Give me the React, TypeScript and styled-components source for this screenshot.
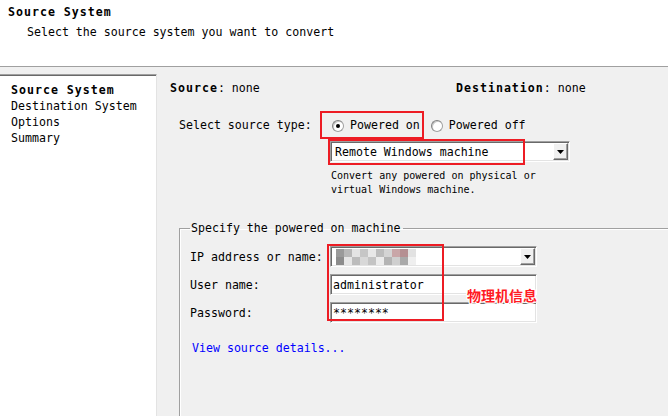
import React from "react";
import styled, { createGlobalStyle } from "styled-components";

const GlobalStyle = createGlobalStyle`
  html, body { margin: 0; padding: 0; }
  body {
    background: #f0f0f0;
    font-family: "DejaVu Sans Mono", "Liberation Mono", monospace;
    font-size: 11.6px;
    color: #000;
  }
  * { box-sizing: border-box; }
`;

const Page = styled.div`
  width: 668px;
  height: 416px;
  overflow: hidden;
  display: flex;
  flex-direction: column;
  background: #f0f0f0;
`;

const Header = styled.header`
  flex-shrink: 0;
  height: 67px;
  background: #fff;
  border-bottom: 1px solid #a0a0a0;
  padding: 4px 0 0 8px;
`;

const Title = styled.div`
  font-weight: bold;
  letter-spacing: 1px;
  line-height: 16px;
`;

const Subtitle = styled.div`
  margin-top: 4px;
  padding-left: 19px;
  line-height: 16px;
`;

const Body = styled.div`
  flex: 1;
  min-height: 0;
  display: flex;
  margin-top: 7px;
`;

const Nav = styled.nav`
  width: 157px;
  flex-shrink: 0;
  background: #fff;
  border-top: 1px solid #a0a0a0;
  border-right: 1px solid #e3e3e3;
  box-shadow: inset 0 1px 0 #696969;
  padding: 7px 0 0 11px;
`;

const NavItem = styled.div<{ $active?: boolean }>`
  line-height: 16px;
  white-space: nowrap;
  font-weight: ${(p) => (p.$active ? "bold" : "normal")};
  letter-spacing: ${(p) => (p.$active ? "1px" : "0")};
`;

const Main = styled.main`
  flex: 1;
  position: relative;
  overflow: hidden;
  padding: 6px 0 0 13px;
`;

const SummaryRow = styled.div`
  display: flex;
  line-height: 16px;
  white-space: nowrap;
`;

const SummaryCell = styled.div<{ $w?: number }>`
  width: ${(p) => (p.$w ? `${p.$w}px` : "auto")};
`;

const Key = styled.span`
  font-weight: bold;
  letter-spacing: 1px;
`;

const Form = styled.div`
  padding-left: 9px;
`;

const TypeRow = styled.div`
  margin-top: 21px;
  height: 16px;
  display: flex;
  align-items: center;
  white-space: nowrap;
`;

const TypeLabel = styled.div`
  width: 153px;
  line-height: 16px;
`;

const RadioOption = styled.label`
  display: flex;
  align-items: center;
  gap: 6px;
  line-height: 16px;
  & + & { margin-left: 11px; }
`;

const RadioCircle = styled.span<{ $checked?: boolean }>`
  position: relative;
  width: 12px;
  height: 12px;
  margin-top: 2px;
  border-radius: 50%;
  background: #fff;
  border: 1px solid #a0a0a0;
  border-top-color: #808080;
  border-left-color: #808080;
  box-shadow: inset 1px 1px 0 #c8c8c8;
  &::after {
    content: "";
    display: ${(p) => (p.$checked ? "block" : "none")};
    position: absolute;
    left: 3px;
    top: 3px;
    width: 4px;
    height: 4px;
    border-radius: 50%;
    background: #000;
  }
`;

const sunken = `
  background: #fff;
  border: 1px solid;
  border-color: #a0a0a0 #fff #fff #a0a0a0;
  box-shadow: inset 1px 1px 0 #696969, inset -1px -1px 0 #e3e3e3;
`;

const Combo = styled.div<{ $w: number }>`
  ${sunken}
  width: ${(p) => p.$w}px;
  height: 21px;
  display: flex;
  align-items: center;
  padding-left: 4px;
  white-space: nowrap;
`;

const ComboText = styled.span`
  flex: 1;
  line-height: 16px;
  overflow: hidden;
`;

const ArrowButton = styled.span`
  width: 15px;
  height: 17px;
  margin: 1px;
  background: #f0f0f0;
  border: 1px solid;
  border-color: #fff #696969 #696969 #fff;
  box-shadow: inset -1px -1px 0 #a0a0a0;
  display: flex;
  align-items: center;
  justify-content: center;
`;

const SourceCombo = styled.div`
  margin: 8px 0 0 151px;
`;

const Description = styled.div`
  margin: 7px 0 0 152px;
  font-size: 10px;
  line-height: 14px;
  white-space: nowrap;
`;

const GroupBox = styled.fieldset`
  margin: 23px 0 0 0;
  width: 600px;
  min-height: 220px;
  padding: 0 0 0 10px;
  border: none;
  border-top: 1px solid #a0a0a0;
  border-left: 1px solid #a0a0a0;
  box-shadow: inset 1px 1px 0 #fff;
`;

const Legend = styled.legend`
  padding: 0 3px 0 1px;
  line-height: 16px;
  white-space: nowrap;
`;

const Fields = styled.div`
  margin-top: 10px;
`;

const FieldRow = styled.div`
  display: flex;
  align-items: center;
  height: 21px;
  & + & { margin-top: 7px; }
`;

const FieldLabel = styled.div`
  width: 140px;
  line-height: 16px;
  white-space: nowrap;
`;

const TextBox = styled.div`
  ${sunken}
  width: 207px;
  height: 21px;
  display: flex;
  align-items: center;
  padding-left: 2px;
  line-height: 16px;
`;

const Mosaic = styled.span`
  display: grid;
  grid-template-columns: repeat(10, 8px);
  grid-auto-rows: 8px;
  margin-left: 1px;
`;

const Cell = styled.span<{ $c: string }>`
  background: ${(p) => p.$c};
`;

const Link = styled.a`
  display: block;
  margin: 17px 0 0 2px;
  color: #0000ff;
  line-height: 16px;
  text-decoration: none;
  cursor: pointer;
`;

const RedBox = styled.div<{ $x: number; $y: number; $w: number; $h: number }>`
  position: absolute;
  left: ${(p) => p.$x}px;
  top: ${(p) => p.$y}px;
  width: ${(p) => p.$w}px;
  height: ${(p) => p.$h}px;
  border: 2px solid #ed1c24;
  pointer-events: none;
`;

const Note = styled.div`
  position: absolute;
  left: 310px;
  top: 211px;
  line-height: 20px;
  font-family: "Noto Sans CJK SC", "Noto Sans", sans-serif;
  font-weight: bold;
  font-size: 14px;
  color: #ff1a24;
  text-shadow: 1px 0 0 #fff, -1px 0 0 #fff, 0 1px 0 #fff, 0 -1px 0 #fff,
    1px 1px 0 #fff, -1px -1px 0 #fff, 1px -1px 0 #fff, -1px 1px 0 #fff;
`;

const Arrow = () => (
  <svg width="7" height="4" viewBox="0 0 7 4">
    <polygon points="0,0 7,0 3.5,4" fill="#000" />
  </svg>
);

const mosaicColors = [
  "#9a9a9a", "#b8b8b8", "#e4e4e4", "#c6c6c6", "#e8e8e8", "#bdbdbd", "#d4d4d4", "#c9a6a8", "#b58f92", "#e2e2e2",
  "#8c8c8c", "#e6e6e6", "#bcbcbc", "#d8d8d8", "#c4c4c4", "#ececec", "#b4b4b4", "#cfcfcf", "#a9a9a9", "#efefef",
];

export default function App() {
  return (
    <>
      <GlobalStyle />
      <Page>
        <Header>
          <Title>Source System</Title>
          <Subtitle>Select the source system you want to convert</Subtitle>
        </Header>
        <Body>
          <Nav>
            <NavItem $active>Source System</NavItem>
            <NavItem>Destination System</NavItem>
            <NavItem>Options</NavItem>
            <NavItem>Summary</NavItem>
          </Nav>
          <Main>
            <SummaryRow>
              <SummaryCell $w={286}>
                <Key>Source</Key>: none
              </SummaryCell>
              <SummaryCell>
                <Key>Destination</Key>: none
              </SummaryCell>
            </SummaryRow>
            <Form>
              <TypeRow>
                <TypeLabel>Select source type:</TypeLabel>
                <RadioOption>
                  <RadioCircle $checked />
                  Powered on
                </RadioOption>
                <RadioOption>
                  <RadioCircle />
                  Powered off
                </RadioOption>
              </TypeRow>
              <SourceCombo>
                <Combo $w={240}>
                  <ComboText>Remote Windows machine</ComboText>
                  <ArrowButton>
                    <Arrow />
                  </ArrowButton>
                </Combo>
              </SourceCombo>
              <Description>
                Convert any powered on physical or
                <br />
                virtual Windows machine.
              </Description>
              <GroupBox>
                <Legend>Specify the powered on machine</Legend>
                <Fields>
                  <FieldRow>
                    <FieldLabel>IP address or name:</FieldLabel>
                    <Combo $w={207}>
                      <ComboText>
                        <Mosaic>
                          {mosaicColors.map((c, i) => (
                            <Cell key={i} $c={c} />
                          ))}
                        </Mosaic>
                      </ComboText>
                      <ArrowButton>
                        <Arrow />
                      </ArrowButton>
                    </Combo>
                  </FieldRow>
                  <FieldRow>
                    <FieldLabel>User name:</FieldLabel>
                    <TextBox>administrator</TextBox>
                  </FieldRow>
                  <FieldRow>
                    <FieldLabel>Password:</FieldLabel>
                    <TextBox>********</TextBox>
                  </FieldRow>
                </Fields>
                <Link>View source details...</Link>
              </GroupBox>
            </Form>
            <RedBox $x={163} $y={37} $w={104} $h={28} />
            <RedBox $x={171} $y={65} $w={197} $h={26} />
            <RedBox $x={170} $y={170} $w={117} $h={77} />
            <Note>物理机信息</Note>
          </Main>
        </Body>
      </Page>
    </>
  );
}
